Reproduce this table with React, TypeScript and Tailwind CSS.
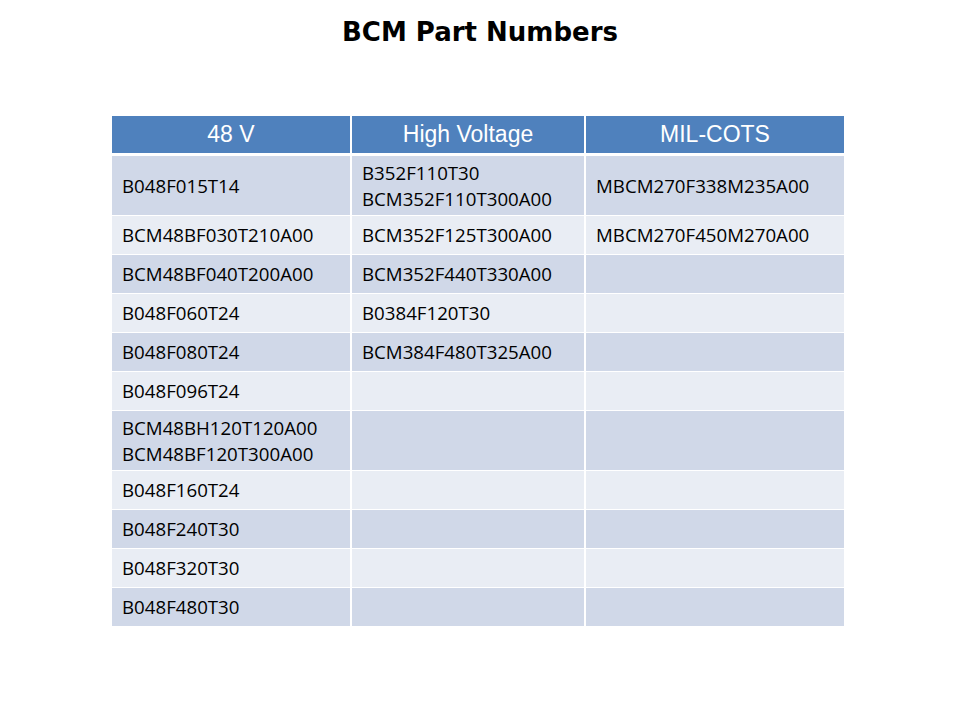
import React from 'react';

type Row = [string[], string[], string[]];

const rows: Row[] = [
  [['B048F015T14'], ['B352F110T30', 'BCM352F110T300A00'], ['MBCM270F338M235A00']],
  [['BCM48BF030T210A00'], ['BCM352F125T300A00'], ['MBCM270F450M270A00']],
  [['BCM48BF040T200A00'], ['BCM352F440T330A00'], []],
  [['B048F060T24'], ['B0384F120T30'], []],
  [['B048F080T24'], ['BCM384F480T325A00'], []],
  [['B048F096T24'], [], []],
  [['BCM48BH120T120A00', 'BCM48BF120T300A00'], [], []],
  [['B048F160T24'], [], []],
  [['B048F240T30'], [], []],
  [['B048F320T30'], [], []],
  [['B048F480T30'], [], []],
];

const widths = ['w-[238px]', 'w-[232px]', 'w-[258px]'];
const headers = ['48 V', 'High Voltage', 'MIL-COTS'];

const App = () => {
  return (
    <div className="w-[960px] h-[720px] bg-white">
      <h1 className="pt-4 text-center text-[26px] leading-[32px] font-bold text-black font-['DejaVu_Sans',sans-serif]">
        BCM Part Numbers
      </h1>

      <div className="mt-[68px] ml-[112px] w-[732px] flex flex-col gap-[1px]">
        {/* header */}
        <div className="flex gap-[2px] mb-[2px]">
          {headers.map((h, i) => (
            <div
              key={h}
              className={`${widths[i]} h-[37px] bg-[#4f81bd] text-white flex items-center justify-center text-[23px] font-['Liberation_Sans',Arial,sans-serif]`}
            >
              {h}
            </div>
          ))}
        </div>

        {rows.map((row, r) => {
          const tall = row.some((c) => c.length > 1);
          const bg = r % 2 === 0 ? 'bg-[#d0d8e8]' : 'bg-[#e9edf4]';
          return (
            <div key={r} className="flex gap-[2px]">
              {row.map((cell, c) => (
                <div
                  key={c}
                  className={`${widths[c]} ${tall ? 'h-[59px]' : 'h-[38px]'} ${bg} px-[10px] flex flex-col justify-center text-[18.7px] leading-[26px] text-black font-['Open_Sans',sans-serif]`}
                >
                  {cell.map((line) => (
                    <span key={line}>{line}</span>
                  ))}
                </div>
              ))}
            </div>
          );
        })}
      </div>
    </div>
  );
};

export default App;
